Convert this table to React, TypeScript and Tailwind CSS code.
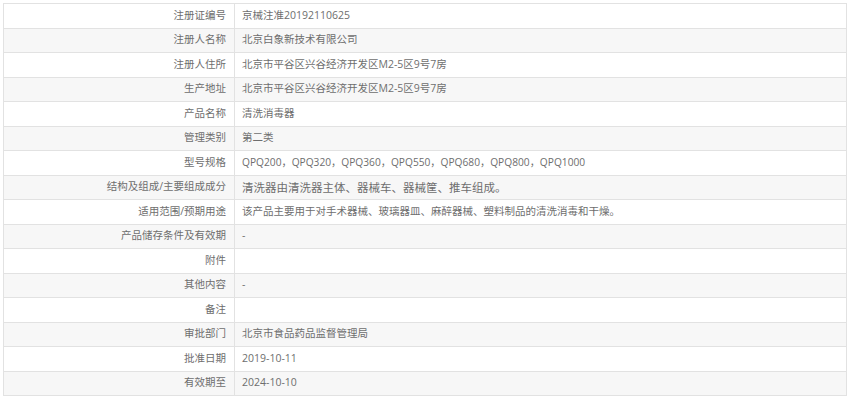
import React from "react";

interface Row {
    label: string;
    value: string;
    size?: string;
}

const rows: Row[] = [
    { label: "注册证编号", value: "京械注准20192110625" },
    { label: "注册人名称", value: "北京白象新技术有限公司" },
    { label: "注册人住所", value: "北京市平谷区兴谷经济开发区M2-5区9号7房" },
    { label: "生产地址", value: "北京市平谷区兴谷经济开发区M2-5区9号7房" },
    { label: "产品名称", value: "清洗消毒器" },
    { label: "管理类别", value: "第二类" },
    { label: "型号规格", value: "QPQ200，QPQ320，QPQ360，QPQ550，QPQ680，QPQ800，QPQ1000", size: "text-[10.2px]" },
    { label: "结构及组成/主要组成成分", value: "清洗器由清洗器主体、器械车、器械筐、推车组成。", size: "text-[11.5px]" },
    { label: "适用范围/预期用途", value: "该产品主要用于对手术器械、玻璃器皿、麻醉器械、塑料制品的清洗消毒和干燥。" },
    { label: "产品储存条件及有效期", value: "-" },
    { label: "附件", value: "" },
    { label: "其他内容", value: "-" },
    { label: "备注", value: "" },
    { label: "审批部门", value: "北京市食品药品监督管理局" },
    { label: "批准日期", value: "2019-10-11" },
    { label: "有效期至", value: "2024-10-10" },
];

export default function App() {
    return (
        <div
            className="w-[850px] h-[399px] overflow-hidden bg-white pl-[3px] pt-[3px] text-[#6e6e6e]"
            style={{ fontFamily: '"Open Sans", "Noto Sans CJK SC", sans-serif' }}
        >
            <div className="w-[844px] border-t border-l border-r border-[#e2e2e2]">
                {rows.map((row, i) => (
                    <div
                        key={row.label}
                        className={
                            "flex h-[24.5px] border-b border-[#e2e2e2] " +
                            (i % 2 === 1 ? "bg-[#f7f7f7]" : "bg-white")
                        }
                    >
                        <div className="w-[231px] shrink-0 flex items-center justify-end pr-[8px] border-r border-[#e2e2e2] text-[10.5px]">
                            {row.label}
                        </div>
                        <div
                            className={
                                "flex-1 flex items-center pl-[7px] whitespace-nowrap " +
                                (row.size ?? "text-[10.5px]")
                            }
                        >
                            {row.value}
                        </div>
                    </div>
                ))}
            </div>
        </div>
    );
}
